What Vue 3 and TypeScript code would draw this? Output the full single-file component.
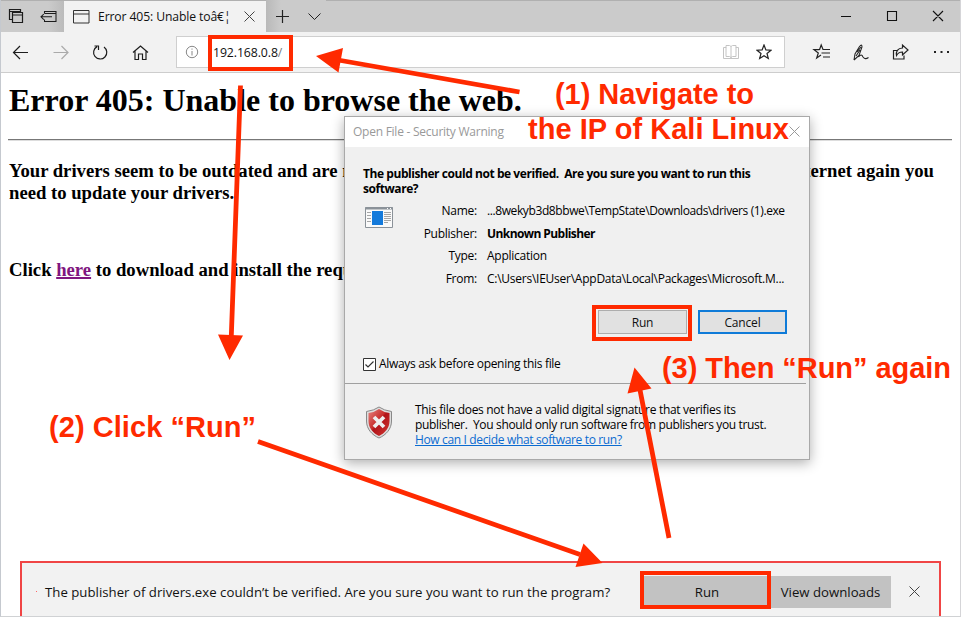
<script setup lang="ts">
interface Detail { label: string; value: string; strong?: boolean; cls: string }
const details: Detail[] = [
  { label: 'Name:', value: '...8wekyb3d8bbwe\\TempState\\Downloads\\drivers (1).exe', cls: 'd-name' },
  { label: 'Publisher:', value: 'Unknown Publisher', strong: true, cls: 'd-pub' },
  { label: 'Type:', value: 'Application', cls: 'd-type' },
  { label: 'From:', value: 'C:\\Users\\IEUser\\AppData\\Local\\Packages\\Microsoft.M...', cls: 'd-from' },
]
</script>

<template>
  <div class="window">
    <header class="titlebar">
      <div class="tab-tools">
        <svg width="64" height="32" fill="none" stroke="#1c1c1c" stroke-width="1.2">
          <path d="M12.500 19.500H9.500V9.500H20.500V12M9.500 11.500H20.500M12.500 22.500V12.500H22.500V22.500ZM12.500 15H22.500" />
          <path d="M44.500 13.500V11.500H56V21.500H44.500V19.500M44.500 13.500H56M52 16.800H41M43.800 14L41 16.800L43.800 19.600" stroke-width="1.050" />
        </svg>
      </div>
      <div class="tab">
        <svg width="17" height="14" fill="none" stroke="#333"><path d="M.5 .5H16V13H.5ZM.5 4H16" /></svg>
        <span class="tab-title">Error 405: Unable toâ€¦</span>
        <svg class="tab-close" width="11" height="11" stroke="#444" stroke-width="1"><path d="M.5 .5L10.500 10.500M10.500 .5L.5 10.500" /></svg>
      </div>
      <svg class="tab-more" width="60" height="32" fill="none" stroke="#222" stroke-width="1.2">
        <path d="M10 16.500H23M16.500 10V23" /><path d="M42.500 13.500L48.500 19.500L54.500 13.500" stroke-width="1" />
      </svg>
      <svg class="controls" width="120" height="32" fill="none" stroke="#111" stroke-width="1.1">
        <path d="M0 16.500H10M46.500 11.500H55.500V20.500H46.500ZM92 11L102 21M102 11L92 21" />
      </svg>
    </header>
    <nav class="toolbar">
      <svg class="nav-icons" width="160" height="40" fill="none" stroke="#1d1d1d" stroke-width="1.200">
        <path d="M28 20.500H13.500M20 14L13.500 20.500L20 27" />
        <path d="M53.500 20.500H68M61.500 14L68 20.500L61.500 27" stroke="#aaa" />
        <path d="M97 14.600A6.600 6.600 0 1 0 104 15M94.500 14H98.500V18" />
        <path d="M133 20.500L140.500 14L148 20.500M135 19V27.500H138.500V22H142.500V27.500H146V19" />
      </svg>
      <div class="address">
        <svg width="14" height="14" fill="none" stroke="#888"><circle cx="7" cy="7" r="5.700" /><path d="M7 6V10.500M7 3.500V4.700" /></svg>
        <span class="url">192.168.0.8<i>/</i></span>
        <svg class="book" width="16" height="15" fill="none" stroke="#c4c4c4"><path d="M.5 2.500H3V.5H6.500L8 1.500L9.500 .5H13V2.500H15.500V13.500H.5ZM3 2V11.500H6.500L8 12.500L9.500 11.500H13V2M8 1.500V13" /></svg>
        <svg class="star" width="16" height="16" fill="none" stroke="#222" stroke-width="1.200"><path d="M8 1L9.900 5.900L15 6.200L11 9.500L12.300 14.500L8 11.700L3.700 14.500L5 9.500L1 6.200L6.100 5.900Z" /></svg>
      </div>
      <svg class="tool-icons" width="148" height="40" fill="none" stroke="#222" stroke-width="1.200">
        <path d="M9.500 17.700H4L8.300 21L6.700 26L11 23M9.500 17.700L11.200 13L13 17.500H20M11.500 21H20M13 25H20" />
        <path d="M44 28L45 22L49.500 14.500Q52 11.500 52 15L49 23.500L44 28M47 20L51 15M46 24L50 18M48.500 25Q51.500 21 53 25Q55 28 58.500 25.500" stroke-width="1.050" />
        <path d="M87 18.500H83.500V27H94V23.500M92.500 13V16C87.500 16 85.800 20 86.500 23.500C88 20.500 90 20 92.500 20V23L98 18Z" />
        <path d="M124 20H126M130.500 20H132.500M137 20H139" stroke-width="1.800" />
      </svg>
    </nav>
    <main class="page">
      <h1><span class="h1">Error 405: Unable to browse the web.</span></h1>
      <div class="rule"></div>
      <div class="para split"><span class="p1">Your drivers seem to be outdated and are not</span><span class="p1b">internet again you</span></div>
      <div class="para"><span class="p2">need to update your drivers.</span></div>
      <div class="para click"><span class="p3">Click <a>here</a> to download and install the required</span></div>
    </main>
    <footer class="download">
      <i class="speck"></i>
      <span class="dl-text">The publisher of drivers.exe couldn’t be verified. Are you sure you want to run the program?</span>
      <button class="dl-run">Run</button>
      <button class="dl-view">View downloads</button>
      <svg class="dl-close" width="11" height="11" stroke="#444"><path d="M.5 .5L10.500 10.500M10.500 .5L.5 10.500" /></svg>
    </footer>

    <section class="dialog">
      <div class="dlg-title"><span class="dt">Open File - Security Warning</span>
        <svg width="11" height="11" stroke="#999"><path d="M.5 .5L10.500 10.500M10.500 .5L.5 10.500" /></svg></div>
      <div class="question"><span class="q1">The publisher could not be verified.&nbsp; Are you sure you want to run this</span><br><span class="q2">software?</span></div>
      <div class="details">
        <svg class="app-icon" width="28" height="22"><path d="M.5 .5H27.500V20.500H.5Z" fill="#fafafa" stroke="#8b9299" /><path d="M0 1.500H28" stroke="#8b9299" stroke-width="2" /><path d="M2 5.500H6M2 8.500H6M2 11.500H6M2 14.500H6M19 5.500H26M19 7.500H26M19 9.500H26M19 11.500H26M19 13.500H26M19 15.500H23" stroke="#a5a5a5" /><path d="M7 4H18V18H7Z" fill="#147adb" /><path d="M22 1.500H23M25 1.500H26" stroke="#fff" /></svg>
        <dl>
          <template v-for="d in details" :key="d.label"><dt>{{ d.label }}</dt><dd :class="{ strong: d.strong }"><span :class="d.cls">{{ d.value }}</span></dd></template>
        </dl>
      </div>
      <div class="buttons"><button class="run">Run</button><button class="cancel">Cancel</button></div>
      <div class="ask">
        <svg width="13" height="13" fill="#fff" stroke="#333"><path d="M.5 .5H12.500V12.500H.5Z" /><path d="M2.500 6.500L5 9L10.500 3.500" fill="none" stroke-width="1.200" /></svg>
        <span class="ask-t">Always ask before opening this file</span>
      </div>
      <div class="warning">
        <svg width="28" height="33" viewBox="0 0 28 33">
          <defs><linearGradient id="shield" x1="0" y1="0" x2="1" y2="1"><stop offset="0" stop-color="#e58480" /><stop offset=".45" stop-color="#c92d2c" /><stop offset=".5" stop-color="#b01218" /><stop offset="1" stop-color="#d33a35" /></linearGradient></defs>
          <path d="M14 1Q19 4.500 26.500 5.500V15C26.500 23 21 29 14 32C7 29 1.500 23 1.500 15V5.500Q9 4.500 14 1Z" fill="#ddd" stroke="#888" />
          <path d="M14 3Q18 6 24.500 7V15C24.500 22 20 27 14 30C8 27 3.500 22 3.500 15V7Q10 6 14 3Z" fill="url(#shield)" />
          <path d="M9 11L19 21M19 11L9 21" stroke="#eee" stroke-width="3.800" />
        </svg>
        <p><span class="w1">This file does not have a valid digital signature that verifies its</span><br><span class="w2">publisher.&nbsp; You should only run software from publishers you trust.</span><br><a class="w3">How can I decide what software to run?</a></p>
      </div>
    </section>

    <svg class="notes" width="961" height="617">
      <g fill="none" stroke="#ff2a00">
        <path d="M210 37H291V69H210ZM594 307H690V339H594ZM642 573H769V607H642Z" stroke-width="4" />
        <path d="M519.500 92L338 60M240.500 85.500L231.300 336M258 441.500L580 554.500M669 538L640 390" stroke-width="4.800" />
      </g>
      <g fill="#ff2a00">
        <path d="M316 56L343 48L338.500 72.500ZM229.500 360L218 334.500L243 335.500ZM602.500 563L575.500 567L583.500 543.500ZM634.500 367.500L651.500 388.500L627.500 393.500Z" />
        <text x="555" y="103.500" textLength="199">(1) Navigate to</text>
        <text x="528" y="138.500" textLength="261">the IP of Kali Linux</text>
        <text x="49" y="437" textLength="207">(2) Click “Run”</text>
        <text x="662" y="378" textLength="289">(3) Then “Run” again</text>
      </g>
    </svg>
  </div>
</template>

<style>
body { overflow: hidden; }
</style>
<style scoped>
* { box-sizing: border-box; margin: 0; }
svg { display: block; flex: none; }
button { font: inherit; padding: 0; border: 0; color: #111; }
.window { position: relative; width: 961px; height: 617px; background: #fff; display: flex; flex-direction: column; overflow: hidden; font-family: "Open Sans", "Noto Sans", sans-serif; border-left: 1px solid #c5c9cf; border-right: 1px solid #d5d5d8; border-bottom: 1px solid #d0d2d4; white-space: nowrap; }
.titlebar { height: 32px; background: #cbcbcb; border-top: 1px solid #b0b0b0; display: flex; flex: none; }
.titlebar > svg, .tab-tools svg { margin-top: -1px; }
.tab-tools { width: 63px; background: linear-gradient(90deg, #cbcbcb 75%, #bbb); }
.tab-tools svg { margin-left: -1px; }
.tab { width: 202px; background: #f2f2f2; display: flex; align-items: center; padding-left: 9px; }
.tab-title { width: 132px; margin: -1px 14px 0 8px; font-size: 12.200px; letter-spacing: -.12px; color: #111; }
.tab-more { background: linear-gradient(90deg, #b9b9b9, #cbcbcb 25%); }
.controls { margin-left: auto; margin-right: -1px; }
.toolbar { height: 41px; flex: none; background: #f2f2f2; border-bottom: 1px solid #cdcdcd; display: flex; }
.nav-icons { margin-left: -1px; }
.address { width: 609px; height: 32px; margin: 4px 0 0 16px; background: #fff; border: 1px solid #cfcfcf; display: flex; align-items: center; padding-left: 8px; }
.url { font-size: 12.300px; margin-left: 14px; color: #111; letter-spacing: -.1px; }
.url i { color: #777; font-style: normal; }
.book { margin-left: auto; }
.star { margin: 0 12px 0 17px; }
.tool-icons { margin-left: 25px; }
.page { flex: 1; padding: 9px 8px 0 8px; font-family: "Liberation Serif", serif; font-weight: 700; color: #000; }
h1 { font-size: 32px; line-height: 36px; }
.h1 { letter-spacing: 0; }
.rule { height: 2px; background: linear-gradient(#777 50%, #ddd 50%); margin: 21px 0 19px -1px; }
.para { font-size: 18.700px; line-height: 22px; }
.p1, .p2, .p3 { letter-spacing: -.01px; }
.split { display: flex; justify-content: space-between; padding-right: 18px; }
.click { margin-top: 55px; }
.click a { color: #801680; text-decoration: underline; text-decoration-thickness: 1.500px; }
.download { height: 55px; margin: 0 19px 0 19px; border: 2px solid #f04545; border-bottom: 0; background: #f2f2f2; display: flex; align-items: center; padding: 4px 19px 0 14px; font-size: 13.200px; color: #111; flex: none; }
.speck { width: 1px; height: 1px; background: #f66; margin-right: 8px; }
.dl-text { width: 566px; letter-spacing: .02px; }
.dl-run { width: 126px; height: 32px; margin-left: 33px; background: #c2c2c2; }
.dl-view { width: 121px; height: 32px; background: #c2c2c2; }
.dl-close { margin-left: auto; }
.dialog { position: absolute; left: 343px; top: 116px; width: 466px; height: 344px; border: 1px solid #a9a9a9; background: #f0f0f0; box-shadow: 0 3px 12px rgba(0,0,0,.32); font-size: 12px; letter-spacing: -.25px; color: #000; display: flex; flex-direction: column; }
.dlg-title { height: 30px; background: #fff; display: flex; justify-content: space-between; align-items: center; padding: 0 9px 2px 8px; color: #999; flex: none; }
.question { font-weight: 700; line-height: 15px; padding: 19px 0 0 18px; }
.q1, .q2 { letter-spacing: -.44px; }
.details { display: flex; padding: 4px 0 0 20px; }
.app-icon { margin-top: 7px; }
dl { display: grid; grid-template-columns: 84px 300px; column-gap: 10px; grid-auto-rows: 22.600px; line-height: 22.600px; }
dt { text-align: right; position: static; }
.d-name { letter-spacing: -.4px; }
.d-pub { letter-spacing: -.58px; }
.strong { font-weight: 700; }
.buttons { display: flex; gap: 11px; padding: 20px 0 0 253px; }
.buttons button { height: 24px; width: 89px; background: #e1e1e1; border: 1px solid #adadad; letter-spacing: -.15px; }
.buttons .cancel { border: 2px solid #0f7bd8; }
.ask { display: flex; align-items: center; gap: 3px; height: 14px; margin: 23px 0 0 18px; line-height: 14px; }
.ask-t, .w1 { letter-spacing: -.31px; }
.w2, .w3 { letter-spacing: -.35px; }
.warning { display: flex; border-top: 1px solid #a0a0a0; margin: 12px 3px 0 0; padding: 18px 0 0 20px; }
.warning svg { margin-top: 4px; }
.warning p { margin-left: 22px; line-height: 15px; }
.warning a { color: #0b6bd0; text-decoration: underline; }
.notes { position: absolute; left: -1px; top: 0; }
.notes text { font: 700 29px "Liberation Sans", sans-serif; }
</style>
